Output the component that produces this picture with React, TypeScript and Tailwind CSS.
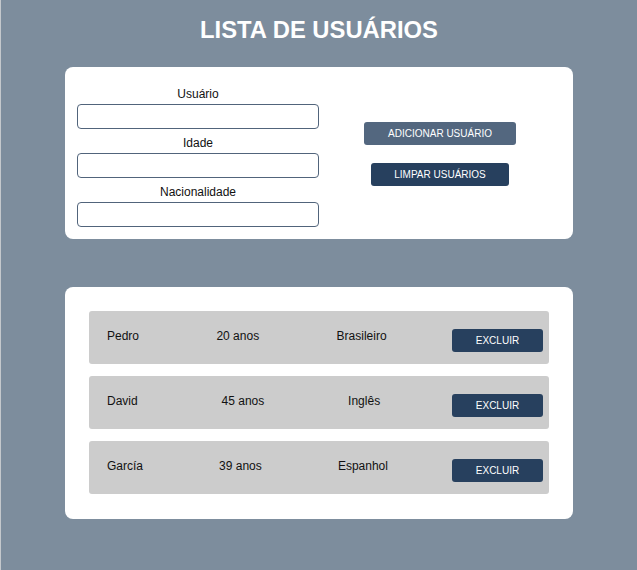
import React from 'react';

const users = [
  { name: 'Pedro', age: '20 anos', nationality: 'Brasileiro' },
  { name: 'David', age: '45 anos', nationality: 'Inglês' },
  { name: 'García', age: '39 anos', nationality: 'Espanhol' },
];

const fields = ['Usuário', 'Idade', 'Nacionalidade'];

const App = () => {
  return (
    <div className="min-h-screen bg-[#7d8d9d] border-l border-[#c4c8cc] font-['Liberation_Sans',Arial,sans-serif] text-[#111] pb-[51px]">
      <h1 className="pt-[16px] mb-[23px] text-center text-[23.8px] leading-[28px] font-bold text-white">
        LISTA DE USUÁRIOS
      </h1>

      {/* Form */}
      <div className="mx-auto w-[508px] bg-white rounded-lg px-[12px] pt-[13px] pb-[12px] grid grid-cols-2">
        <div className="flex flex-col">
          {fields.map((field) => (
            <React.Fragment key={field}>
              <label className="block text-center text-[12px] leading-[18px] mt-[5px] mb-[1px]">{field}</label>
              <input
                type="text"
                className="h-[25px] w-full rounded-[4px] border border-[#51647b] bg-white outline-none"
              />
            </React.Fragment>
          ))}
        </div>
        <div className="flex flex-col items-center justify-center gap-[18px]">
          <button className="h-[23px] px-[24px] rounded-[3px] bg-[#53677f] text-white text-[10px]">
            ADICIONAR USUÁRIO
          </button>
          <button className="h-[23px] px-[23px] rounded-[3px] bg-[#27405e] text-white text-[10px]">
            LIMPAR USUÁRIOS
          </button>
        </div>
      </div>

      {/* Lista */}
      <div className="mx-auto mt-[48px] w-[508px] bg-white rounded-lg px-[24px] pt-[24px] pb-[25px] flex flex-col gap-[12px]">
        {users.map((user) => (
          <div
            key={user.name}
            className="h-[53px] bg-[#cccccc] rounded-[3px] pl-[18px] pr-[6px] pt-[16px] flex items-start justify-between"
          >
            <p className="text-[12px] leading-[18px]">{user.name}</p>
            <p className="text-[12px] leading-[18px]">{user.age}</p>
            <p className="text-[12px] leading-[18px]">{user.nationality}</p>
            <button className="mt-[2px] -ml-[12px] h-[23px] w-[91px] rounded-[3px] bg-[#27405e] text-white text-[10px]">
              EXCLUIR
            </button>
          </div>
        ))}
      </div>
    </div>
  );
};

export default App;
